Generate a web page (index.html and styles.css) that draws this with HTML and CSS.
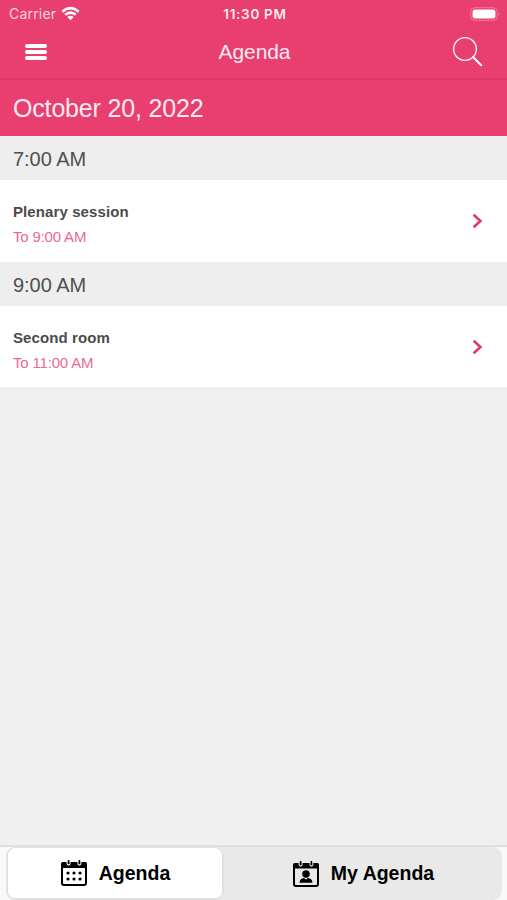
FILE: index.html
```html
<!DOCTYPE html>
<html lang="en">
<head>
    <meta charset="UTF-8">
    <meta name="viewport" content="width=device-width, initial-scale=1.0">
    <title>Agenda</title>
    <link rel="stylesheet" href="styles.css">
</head>
<body>

    <header class="header">
        <div class="status-bar">
            <div class="carrier">
                <span>Carrier</span>
                <svg width="19" height="15" viewBox="0 0 20 15" fill="none" stroke="#fff" stroke-width="2.8">
                    <path d="M1.4 5.6Q10 -2 18.6 5.6"/>
                    <path d="M4.5 8.9Q10 4.2 15.5 8.9"/>
                    <path d="M10 14.6L6.7 11.2Q10 8.5 13.3 11.2Z" fill="#fff" stroke="none"/>
                </svg>
            </div>
            <span class="clock">11:30 PM</span>
            <svg class="battery" width="31" height="14" viewBox="0 0 31 14">
                <rect x=".7" y=".7" width="26.6" height="12.6" rx="4" fill="none" stroke="#f07b9d"/>
                <rect x="2.6" y="2.4" width="22.8" height="9.2" rx="2.4" fill="#fff"/>
                <path d="M28.8 5Q30.6 7 28.8 9Z" fill="#f392ad"/>
            </svg>
        </div>
        <div class="nav-bar">
            <button class="menu" aria-label="Menu"><span></span><span></span><span></span></button>
            <h1>Agenda</h1>
            <button class="search" aria-label="Search">
                <svg width="32" height="32" viewBox="0 0 32 32" fill="none" stroke="#fff">
                    <circle cx="13" cy="13" r="11.4" stroke-width="1.3"/>
                    <path d="M21 21L29.2 29.2" stroke-width="2.1" stroke-linecap="round"/>
                </svg>
            </button>
        </div>
    </header>

    <h2 class="date">October 20, 2022</h2>

    <main class="agenda">
        <h3 class="time">7:00 AM</h3>
        <div class="session">
            <div class="info">
                <p class="title">Plenary session</p>
                <p class="until">To 9:00 AM</p>
            </div>
            <svg width="12" height="16" viewBox="0 0 12 16" fill="none" stroke="#dc3d6b" stroke-width="2.7">
                <path d="M1.6 1.7L8.4 8L1.6 14.3"/>
            </svg>
        </div>
        <h3 class="time">9:00 AM</h3>
        <div class="session">
            <div class="info">
                <p class="title">Second room</p>
                <p class="until">To 11:00 AM</p>
            </div>
            <svg width="12" height="16" viewBox="0 0 12 16" fill="none" stroke="#dc3d6b" stroke-width="2.7">
                <path d="M1.6 1.7L8.4 8L1.6 14.3"/>
            </svg>
        </div>
    </main>

    <footer class="tab-bar">
        <div class="tabs">
            <button class="tab active">
                <svg width="28" height="28" viewBox="0 0 28 28">
                    <rect x="2" y="4" width="24" height="22" rx="2" fill="none" stroke="#000" stroke-width="2"/>
                    <path d="M1 9V5Q1 3 3 3H25Q27 3 27 5V9Z"/>
                    <path d="M7.2 2V5Q8.6 7.2 10 5V2M18 2V5Q19.4 7.2 20.8 5V2" fill="none" stroke="#fff" stroke-width="1.2"/>
                    <path d="M8.6 1V4.9M19.4 1V4.9" stroke="#000" stroke-width="1.6"/>
                    <g>
                        <circle cx="8" cy="14" r="1.6"/><circle cx="14" cy="14" r="1.6"/><circle cx="20" cy="14" r="1.6"/>
                        <circle cx="8" cy="20" r="1.6"/><circle cx="14" cy="20" r="1.6"/><circle cx="20" cy="20" r="1.6"/>
                    </g>
                </svg>
                <span>Agenda</span>
            </button>
            <button class="tab">
                <svg width="28" height="28" viewBox="0 0 28 28">
                    <rect x="2" y="4" width="24" height="22" rx="2" fill="none" stroke="#000" stroke-width="2"/>
                    <path d="M1 8.5V5Q1 3 3 3H25Q27 3 27 5V8.5Z"/>
                    <path d="M7.2 2V5Q8.6 7.2 10 5V2M18 2V5Q19.4 7.2 20.8 5V2" fill="none" stroke="#e9e9e9" stroke-width="1.2"/>
                    <path d="M8.6 1V4.9M19.4 1V4.9" stroke="#000" stroke-width="1.6"/>
                    <circle cx="14" cy="14" r="3.8"/>
                    <path d="M7.5 22.7Q8 18.3 12 18L14 19.6L16 18Q20 18.3 20.5 22.7Z"/>
                </svg>
                <span>My Agenda</span>
            </button>
        </div>
    </footer>

</body>
</html>
```
FILE: styles.css
```css
* {
    box-sizing: border-box;
}

body {
    display: flex;
    flex-direction: column;
    height: 100vh;
    margin: 0;
    background-color: #f0f0f0;
    font-family: "Liberation Sans", Arial, sans-serif;
    overflow: hidden;
}

h1, h2, h3, p {
    margin: 0;
    font-weight: normal;
}

svg {
    display: block;
    flex: none;
}

button {
    border: none;
    padding: 0;
    background: none;
    font-family: inherit;
}

.header {
    height: 80px;
    background-color: #e83e70;
    border-bottom: 2px solid #dc3968;
    color: #fff;
}

.status-bar {
    display: grid;
    grid-template-columns: 1fr auto 1fr;
    align-items: center;
    height: 27px;
    padding: 0 6px 0 9px;
    font-family: Inter, sans-serif;
    font-size: 14px;
}

.carrier {
    display: flex;
    align-items: center;
    gap: 5px;
    color: #fbd5df;
    letter-spacing: 0.2px;
}

.clock {
    font-size: 13.5px;
    font-weight: 600;
    letter-spacing: 0.7px;
    color: #fdeaf0;
}

.battery {
    justify-self: end;
}

.nav-bar {
    display: grid;
    grid-template-columns: 1fr auto 1fr;
    align-items: center;
    height: 50px;
    padding: 0 23px 0 25px;
}

.nav-bar h1 {
    font-size: 21px;
    letter-spacing: -0.1px;
    color: #fdeaf0;
}

.menu {
    display: flex;
    flex-direction: column;
    gap: 2px;
    width: 22px;
}

.menu span {
    height: 4px;
    border-radius: 2px;
    background-color: #fff;
}

.search {
    justify-self: end;
}

.date {
    height: 56px;
    padding-left: 13px;
    background-color: #e83e70;
    color: #fdeaf0;
    font-size: 25px;
    letter-spacing: -0.17px;
    line-height: 56px;
}

.agenda {
    flex: 1;
}

.time {
    height: 44px;
    padding-left: 13px;
    background-color: #eee;
    color: #505050;
    font-size: 20px;
    letter-spacing: -0.05px;
    line-height: 46px;
}

.session {
    display: flex;
    align-items: center;
    justify-content: space-between;
    height: 82px;
    padding: 0 23px 0 13px;
    background-color: #fff;
}

.session:last-child {
    height: 81px;
}

.title {
    padding-top: 6px;
    color: #4b4b4b;
    font-size: 15px;
    font-weight: bold;
    letter-spacing: 0.1px;
    line-height: 25px;
}

.until {
    color: #e96b91;
    font-size: 15px;
    letter-spacing: -0.18px;
    line-height: 25px;
}

.tab-bar {
    height: 55px;
    padding: 0 5px 0 6px;
    border-top: 2px solid #e0e0e0;
    background-color: #f9f9f9;
}

.tabs {
    display: flex;
    height: 53px;
    border-radius: 9px;
    background-color: #e9e9e9;
}

.tab {
    display: flex;
    flex: 1;
    align-items: center;
    justify-content: center;
    gap: 11px;
    color: #000;
    font-size: 19.5px;
    font-weight: bold;
}

.tab.active {
    flex: none;
    width: 218px;
    border: 2px solid #e1e1e1;
    border-top-width: 1px;
    border-radius: 9px;
    background-color: #fff;
}
```
